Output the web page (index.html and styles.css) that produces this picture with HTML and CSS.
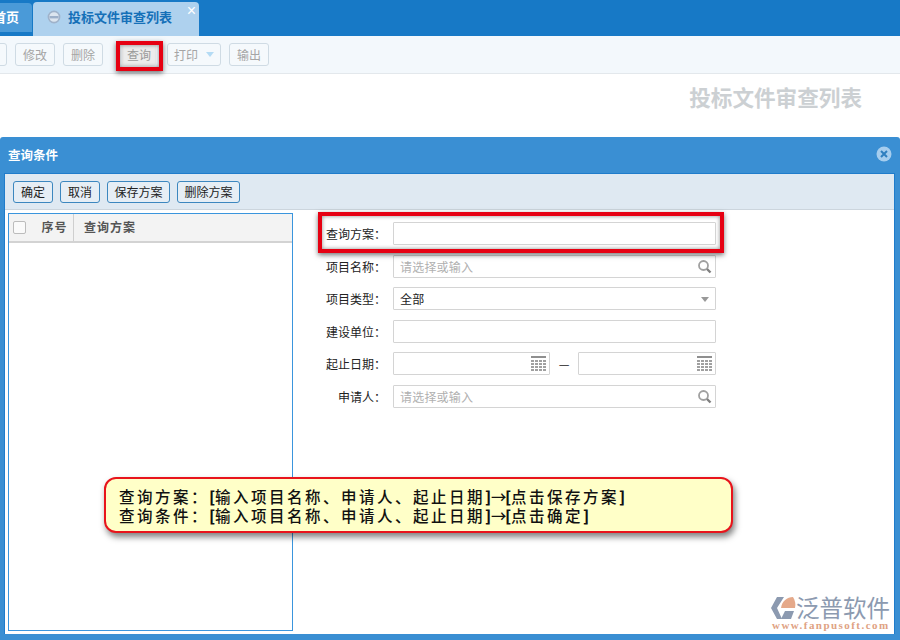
FILE: index.html
```html
<!DOCTYPE html>
<html lang="zh">
<head>
<meta charset="utf-8">
<title>投标文件审查列表</title>
<link rel="stylesheet" href="styles.css">
</head>
<body>
<div class="page">
  <div class="tabbar">
    <div class="tab tab-home">首页</div>
    <div class="tab tab-active">
      <svg class="tab-icon" width="14" height="14" viewBox="0 0 14 14"><circle cx="7" cy="7" r="5.6" fill="#dce5ef" stroke="#9fb2ca" stroke-width="1.6"/><rect x="2.5" y="6" width="9" height="2.4" fill="#9db0c9"/></svg>
      <span>投标文件审查列表</span>
      <span class="tab-close">×</span>
    </div>
  </div>
  <div class="toolbar">
    <button class="tool tool-cut"></button>
    <button class="tool">修改</button>
    <button class="tool">删除</button>
    <button class="tool tool-query">查询</button>
    <button class="tool tool-print">打印<i class="caret"></i></button>
    <button class="tool">输出</button>
  </div>
  <div class="heading"><h1>投标文件审查列表</h1></div>
  <div class="dialog">
    <div class="dialog-title">
      <span>查询条件</span>
      <svg width="16" height="16" viewBox="0 0 16 16"><circle cx="8" cy="8" r="7.5" fill="#a5cdee"/><path d="M5 5l6 6M11 5l-6 6" stroke="#2f7fbf" stroke-width="2"/></svg>
    </div>
    <div class="dialog-body">
      <div class="actions">
        <button class="act">确定</button>
        <button class="act">取消</button>
        <button class="act">保存方案</button>
        <button class="act">删除方案</button>
      </div>
      <div class="content">
        <div class="grid">
          <div class="grid-head">
            <div class="col-check"><i class="checkbox"></i></div>
            <div class="col-no">序号</div>
            <div class="col-name">查询方案</div>
          </div>
        </div>
        <div class="form">
          <div class="row"><label>查询方案：</label><div class="field"></div></div>
          <div class="row"><label>项目名称：</label><div class="field hint">请选择或输入
            <svg class="ico" width="15" height="15" viewBox="0 0 15 15"><circle cx="6.5" cy="6.5" r="4.5" fill="none" stroke="#a0a0a0" stroke-width="1.8"/><path d="M10 10l3.5 3.5" stroke="#808080" stroke-width="2.4"/></svg></div></div>
          <div class="row"><label>项目类型：</label><div class="field">全部<i class="select-caret"></i></div></div>
          <div class="row"><label>建设单位：</label><div class="field"></div></div>
          <div class="row"><label>起止日期：</label>
            <div class="field date"><svg class="ico" width="15" height="15" viewBox="0 0 15 15"><rect width="15" height="2" fill="#8f8f8f"/><path d="M0 5h15M0 8h15M0 11h15M0 14h15" stroke="#a0a0a0" stroke-width="2" stroke-dasharray="3 1"/></svg></div>
            <span class="dash">—</span>
            <div class="field"><svg class="ico" width="15" height="15" viewBox="0 0 15 15"><rect width="15" height="2" fill="#8f8f8f"/><path d="M0 5h15M0 8h15M0 11h15M0 14h15" stroke="#a0a0a0" stroke-width="2" stroke-dasharray="3 1"/></svg></div>
          </div>
          <div class="row"><label>申请人：</label><div class="field hint">请选择或输入
            <svg class="ico" width="15" height="15" viewBox="0 0 15 15"><circle cx="6.5" cy="6.5" r="4.5" fill="none" stroke="#a0a0a0" stroke-width="1.8"/><path d="M10 10l3.5 3.5" stroke="#808080" stroke-width="2.4"/></svg></div></div>
        </div>
      </div>
    </div>
  </div>
  <div class="mark mark-query"></div>
  <div class="mark mark-plan"></div>
  <div class="callout">
    <div>查询方案：<b>[</b>输入项目名称、申请人、起止日期<b>]</b><span class="arrow">→</span><b>[</b>点击保存方案<b>]</b></div>
    <div>查询条件：<b>[</b>输入项目名称、申请人、起止日期<b>]</b><span class="arrow">→</span><b>[</b>点击确定<b>]</b></div>
  </div>
  <div class="logo">
    <div class="logo-top">
      <svg width="26" height="25" viewBox="0 0 26 25"><path d="M7 2h7L7 13l5 11H7L1 13z" fill="#8c9ab0"/><path d="M11 13C12 6 17 2 23 2c2 3 3 7 2 11z" fill="#e5a98a"/><path d="M11 24l4-8h9l-3 8z" fill="#8c9ab0"/></svg>
      <span>泛普软件</span>
    </div>
    <div class="logo-url">www.fanpusoft.com</div>
  </div>
</div>
</body>
</html>
```
FILE: styles.css
```css
* { box-sizing: border-box; }
html, body { margin: 0; padding: 0; background: #fff; }
body { font-family: "Noto Sans CJK SC", "Liberation Sans", sans-serif; font-size: 12px; color: #222; }
.page { position: relative; width: 900px; height: 640px; overflow: hidden; display: flex; flex-direction: column; }

.tabbar { height: 36px; flex: none; display: flex; align-items: flex-end; gap: 1px; background: #1779c6; }
.tab { font-weight: 700; font-size: 13px; }
.tab-home { width: 32px; height: 29px; margin-bottom: 4px; background: #4a9ad8; color: #fff; border-radius: 0 4px 0 0; line-height: 28px; text-indent: -7px; white-space: nowrap; overflow: hidden; }
.tab-active { position: relative; width: 166px; height: 34px; background: #aed1ee; color: #1570b8; border-radius: 4px 4px 0 0; display: flex; align-items: center; gap: 7px; padding: 0 0 5px 14px; }
.tab-icon { flex: none; }
.tab-close { position: absolute; right: 3px; top: 1px; color: #fff; font: 400 16px/16px "Liberation Sans", sans-serif; }

.toolbar { height: 38px; flex: none; display: flex; align-items: center; gap: 8px; background: #f3f8fc; border-bottom: 1px solid #e3e8ec; padding-bottom: 1px; }
.tool { height: 23px; width: 40px; padding: 0; font: 12px "Noto Sans CJK SC", sans-serif; color: #a5a5a5; background: #f5f9fc; border: 1px solid #cfdbe4; border-radius: 3px; display: flex; align-items: center; justify-content: center; }
.tool-cut { width: 18px; margin-left: -11px; }
.tool-query { margin-left: 11px; width: 34px; border: none; background: #ececec; color: #9a9a9a; }
.tool-print { width: 54px; margin-left: 3px; gap: 8px; }
.caret { width: 0; height: 0; border: 4px solid transparent; border-top: 5px solid #b4dbf4; border-bottom: 0; }

.heading { height: 63px; flex: none; display: flex; justify-content: flex-end; padding: 8px 38px 0 0; }
.heading h1 { margin: 0; font-size: 21.6px; line-height: 30px; font-weight: 700; color: #ccd0d3; }

.dialog { flex: 1; display: flex; flex-direction: column; background: #3a8fd3; border-radius: 3px 3px 0 0; padding: 0 5px 6px 0; }
.dialog-title { height: 36px; flex: none; display: flex; align-items: center; justify-content: space-between; padding: 0 3px 2px 8px; color: #fff; font-weight: 700; font-size: 12.5px; }
.dialog-body { flex: 1; display: flex; flex-direction: column; margin-left: 4px; background: #fff; border: 1px solid #1f7ccb; border-bottom: 0; min-height: 0; }
.actions { height: 36px; flex: none; display: flex; align-items: center; gap: 7px; padding: 0 8px; background: #dfe9f2; border-bottom: 1px solid #ccd5dd; }
.act { height: 22px; padding: 0 6.5px; min-width: 40px; font: 12px "Noto Sans CJK SC", sans-serif; color: #222; background: #e6eef5; border: 1px solid #3c87bf; border-radius: 3px; }

.content { flex: 1; display: flex; min-height: 0; padding: 3px 0 3px 3px; }
.grid { width: 285px; flex: none; border: 1px solid #3a95dd; background: #fff; }
.grid-head { height: 29px; display: flex; align-items: center; background: #f3f3f3; border-bottom: 2px solid #d3d3d3; color: #555; font-weight: 700; letter-spacing: 1px; }
.col-check { width: 27px; padding-left: 4px; display: flex; }
.checkbox { width: 13px; height: 13px; background: #fafafa; border: 1px solid #bcbcbc; border-radius: 2px; }
.col-no { width: 38px; height: 100%; line-height: 25px; text-align: center; border-right: 1px solid #cfcfcf; }
.col-name { padding: 0 0 2px 10px; }

.form { margin-left: 27px; width: 396px; padding-top: 9px; display: flex; flex-direction: column; gap: 9.5px; }
.row { height: 23px; display: flex; align-items: center; }
.row label { width: 73px; flex: none; text-align: right; padding-right: 7px; white-space: nowrap; }
.field { position: relative; flex: 1; height: 23px; line-height: 21px; padding-left: 6px; border: 1px solid #d4d4d4; border-radius: 1px; background: #fff; letter-spacing: .2px; }
.hint { color: #b0b0b0; }
.ico { position: absolute; right: 3px; top: 3px; }
.select-caret { position: absolute; right: 6px; top: 9px; width: 0; height: 0; border: 4px solid transparent; border-top: 5px solid #999; border-bottom: 0; }
.date { flex: none; width: 157px; }
.dash { width: 28px; text-align: center; flex: none; }

.mark { position: absolute; border: 4px solid #e60012; box-shadow: 0 2px 5px rgba(0,0,0,.55), inset 0 0 4px rgba(0,0,0,.45); }
.mark-query { left: 116px; top: 41px; width: 47px; height: 30px; }
.mark-plan { left: 318px; top: 212px; width: 406px; height: 41px; }

.callout { position: absolute; left: 104px; top: 477px; width: 629px; height: 56px; padding: 8px 0 0 13px; background: #ffffc8; border: 2px solid #e8141c; border-radius: 12px; box-shadow: 2px 4px 6px rgba(0,0,0,.5); font-size: 15.5px; font-weight: 500; line-height: 19px; color: #111; letter-spacing: 2.5px; white-space: nowrap; }
.callout b { display: inline-block; width: 6px; font-weight: 900; letter-spacing: 0; }
.arrow { display: inline-block; width: 14px; letter-spacing: 0; text-align: center; overflow: visible; }

.logo { position: absolute; left: 770px; top: 594px; width: 122px; }
.logo-top { display: flex; align-items: center; color: #8c9ab0; font-size: 23.5px; line-height: 26px; white-space: nowrap; }
.logo-url { color: #e0a283; font: 700 11px/11px "Liberation Serif", serif; letter-spacing: 1.45px; white-space: nowrap; margin-left: 2px; }
```
